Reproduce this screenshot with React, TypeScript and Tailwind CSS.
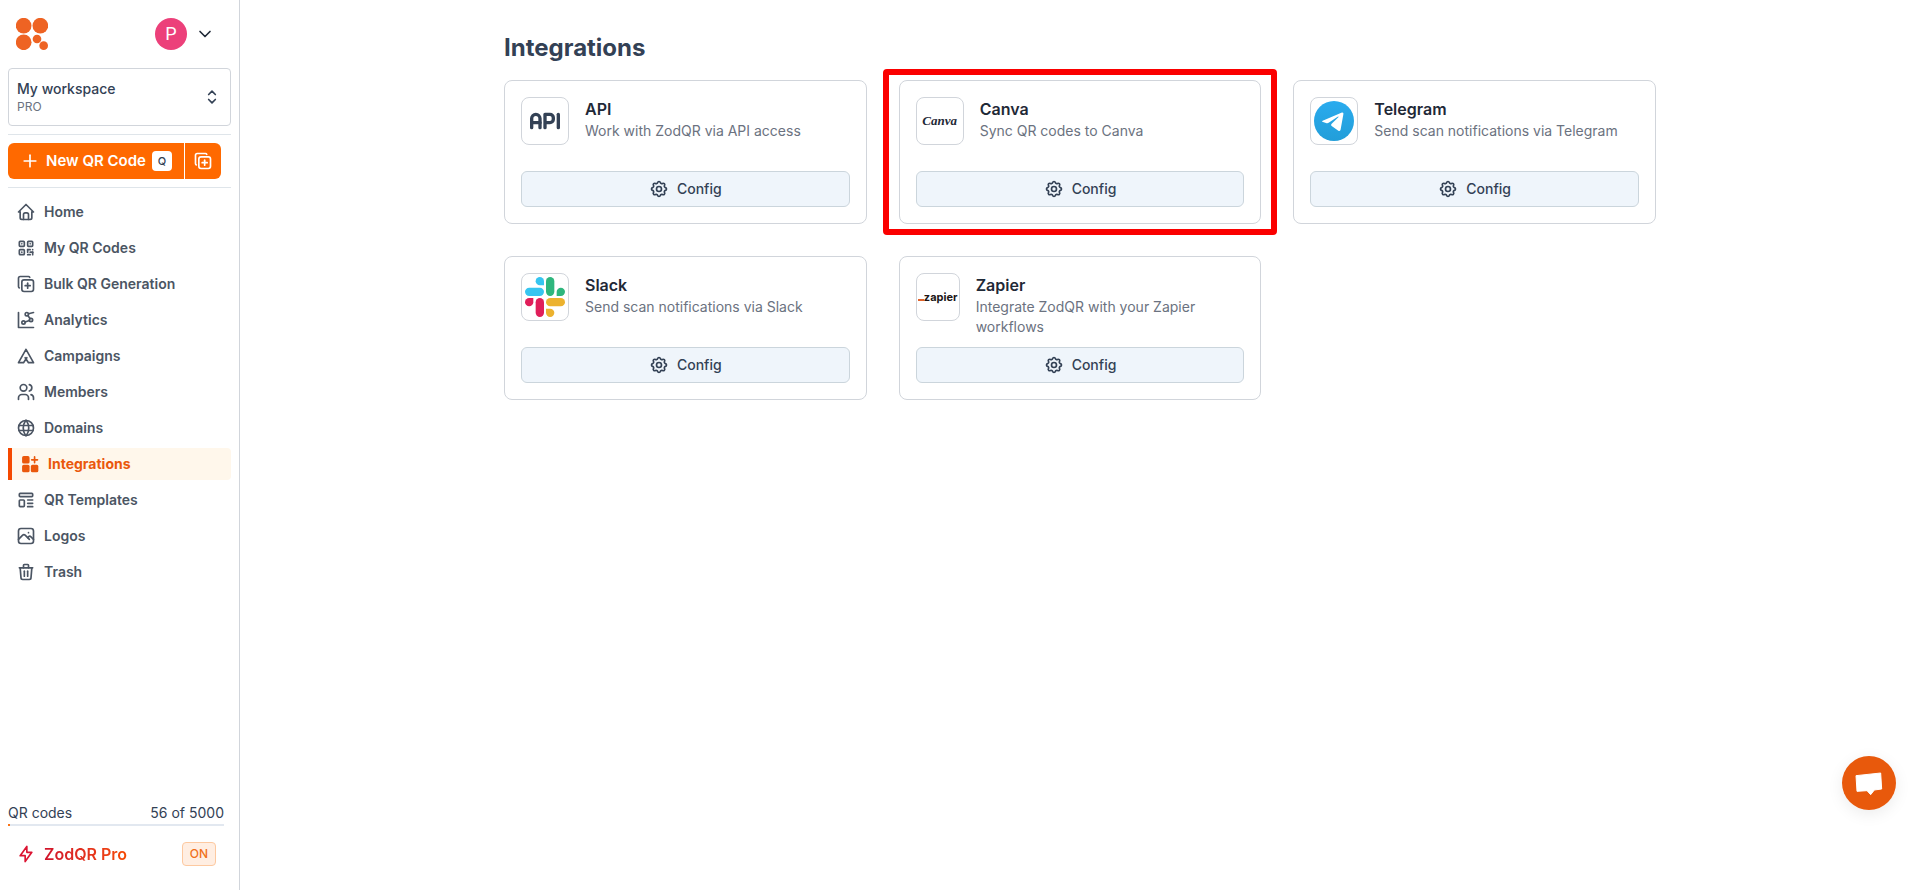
import type { ComponentType, ReactNode } from "react";
import {
  TbApi,
  TbBolt,
  TbChartDots2,
  TbChevronDown,
  TbCopyPlus,
  TbHome,
  TbPhoto,
  TbPlus,
  TbQrcode,
  TbSelector,
  TbSettings,
  TbTemplate,
  TbTent,
  TbTrash,
  TbUsers,
  TbWorld,
} from "react-icons/tb";

type IconProps = { className?: string };

function BrandLogo() {
  return (
    <svg viewBox="0 0 96 96" className="size-8" fill="#ee6323" aria-hidden="true">
      <circle cx="23" cy="23" r="23.5" />
      <circle cx="73" cy="23" r="23.5" />
      <circle cx="23" cy="73" r="23.5" />
      <circle cx="63" cy="63" r="13" />
      <circle cx="83" cy="83" r="13" />
    </svg>
  );
}

function AppsIcon({ className }: IconProps) {
  return (
    <svg viewBox="0 0 24 24" className={className} fill="currentColor" aria-hidden="true">
      <rect x="2.5" y="2.5" width="9" height="9" rx="2" />
      <rect x="2.5" y="13" width="9" height="9" rx="2" />
      <rect x="13" y="13" width="9" height="9" rx="2" />
      <path d="M17.5 3.5v7M14 7h7" stroke="currentColor" strokeWidth="2" strokeLinecap="round" />
    </svg>
  );
}

function TelegramLogo() {
  return (
    <svg viewBox="0 0 120 120" className="size-10 shrink-0" aria-hidden="true">
      <defs>
        <linearGradient id="telegram-sky" x1="0" y1="0" x2="0" y2="1">
          <stop offset="0" stopColor="#2aabee" />
          <stop offset="1" stopColor="#229ed9" />
        </linearGradient>
      </defs>
      <circle cx="60" cy="60" r="60" fill="url(#telegram-sky)" />
      <path
        d="M26 59 82 35.500c5-2 7 0 6 5L80 85c-1 6-4 6-8 3.500L53 75q-4-3 0-7l20-19q2-4-2-2L44 65.500q-3 2-6 1L27 63q-6-2-1-4Z"
        fill="#fff"
      />
    </svg>
  );
}

function SlackLogo() {
  return (
    <svg viewBox="0 0 120 120" className="size-10 shrink-0" aria-hidden="true">
      <g fill="#36c5f0">
        <rect x="0" y="32" width="57" height="25" rx="12.500" />
        <path d="M57 25V12.500A12.500 12.500 0 1 0 44.500 25Z" />
      </g>
      <g fill="#2eb67d">
        <rect x="63" y="0" width="25" height="57" rx="12.500" />
        <path d="M95 57h12.500A12.500 12.500 0 1 0 95 44.500Z" />
      </g>
      <g fill="#ecb22e">
        <rect x="63" y="63" width="57" height="25" rx="12.500" />
        <path d="M63 95v12.500A12.500 12.500 0 1 0 75.500 95Z" />
      </g>
      <g fill="#e01e5a">
        <rect x="32" y="63" width="25" height="57" rx="12.500" />
        <path d="M25 63H12.500A12.500 12.500 0 1 0 25 75.500Z" />
      </g>
    </svg>
  );
}

const navItems: { label: string; icon: ComponentType<IconProps>; active?: boolean }[] = [
  { label: "Home", icon: TbHome },
  { label: "My QR Codes", icon: TbQrcode },
  { label: "Bulk QR Generation", icon: TbCopyPlus },
  { label: "Analytics", icon: TbChartDots2 },
  { label: "Campaigns", icon: TbTent },
  { label: "Members", icon: TbUsers },
  { label: "Domains", icon: TbWorld },
  { label: "Integrations", icon: AppsIcon, active: true },
  { label: "QR Templates", icon: TbTemplate },
  { label: "Logos", icon: TbPhoto },
  { label: "Trash", icon: TbTrash },
];

type Integration = {
  name: string;
  description: string;
  logo: ReactNode;
  narrow?: boolean;
  highlighted?: boolean;
};

const integrations: Integration[] = [
  {
    name: "API",
    description: "Work with ZodQR via API access",
    logo: <TbApi className="size-10 shrink-0 text-[#334155]" />,
  },
  {
    name: "Canva",
    description: "Sync QR codes to Canva",
    logo: (
      <span className="font-['Liberation_Serif',serif] text-[13px] font-bold text-[#1f2937] italic">Canva</span>
    ),
    highlighted: true,
  },
  {
    name: "Telegram",
    description: "Send scan notifications via Telegram",
    logo: <TelegramLogo />,
  },
  {
    name: "Slack",
    description: "Send scan notifications via Slack",
    logo: <SlackLogo />,
  },
  {
    name: "Zapier",
    description: "Integrate ZodQR with your Zapier workflows",
    logo: (
      <span className="flex items-baseline text-[11px] font-bold text-[#201515]">
        <span className="h-[2px] w-[6px] bg-[#e0622a]" />
        zapier
      </span>
    ),
    narrow: true,
  },
];

function IntegrationCard({ name, description, logo, narrow, highlighted }: Integration) {
  return (
    <li className="relative rounded-lg border border-[#d1d5db] bg-white p-4">
      <div className="flex min-h-16 items-start gap-4">
        <div
          className={
            narrow
              ? "flex h-12 w-11 shrink-0 items-center justify-center rounded-lg border border-[#d1d5db]"
              : "flex size-12 shrink-0 items-center justify-center rounded-lg border border-[#d1d5db]"
          }
        >
          {logo}
        </div>
        <div>
          <h2 className="text-base font-semibold text-[#1f2937]">{name}</h2>
          <p className="text-sm text-[#6b7280]">{description}</p>
        </div>
      </div>
      <button
        type="button"
        aria-label={`Config ${name}`}
        className="mt-2.5 flex h-9 w-full items-center justify-center gap-2 rounded-md border border-[#cbd5dc] bg-[#eff5fb] text-sm font-medium text-[#334155]"
      >
        <TbSettings className="size-5" />
        Config
      </button>
      {highlighted && (
        <div className="pointer-events-none absolute -inset-x-[17px] -inset-y-3 rounded border-6 border-[#fb0000]" />
      )}
    </li>
  );
}

function Sidebar() {
  return (
    <aside className="flex w-60 shrink-0 flex-col border-r border-[#d1d5db] px-2">
      <div className="flex items-center justify-between pt-[18px] pr-4 pl-2">
        <a href="#" aria-label="ZodQR">
          <BrandLogo />
        </a>
        <button type="button" aria-label="Account" className="flex items-center gap-2">
          <span className="flex size-8 items-center justify-center rounded-full bg-[#ec407a] font-['Roboto',sans-serif] text-lg text-white">
            P
          </span>
          <TbChevronDown className="size-5 text-[#1f2937]" />
        </button>
      </div>

      <button
        type="button"
        className="mt-[18px] flex h-[58px] items-center justify-between rounded border border-[#d1d5db] px-2 text-left"
      >
        <span className="flex flex-col">
          <span className="text-sm font-medium text-[#334155]">My workspace</span>
          <span className="text-xs text-[#6b7280]">PRO</span>
        </span>
        <TbSelector className="size-5 text-[#334155]" />
      </button>

      <div className="mt-2 flex gap-px border-y border-[#dfe5ea] py-2">
        <button
          type="button"
          className="flex h-9 items-center gap-1.5 rounded-l-md bg-[#ff6900] px-3 text-[15px] font-semibold whitespace-nowrap text-white"
        >
          <TbPlus className="size-5" />
          New QR Code
          <kbd className="flex size-5 items-center justify-center rounded-sm bg-white font-['Inter',sans-serif] text-[11px] font-medium text-[#334155]">
            Q
          </kbd>
        </button>
        <button
          type="button"
          aria-label="Bulk create"
          className="flex size-9 items-center justify-center rounded-r-md bg-[#ff6900] text-white"
        >
          <TbCopyPlus className="size-5" />
        </button>
      </div>

      <nav className="mt-2 flex flex-col gap-1">
        {navItems.map(({ label, icon: Icon, active }) => (
          <a
            key={label}
            href="#"
            aria-current={active ? "page" : undefined}
            className={
              active
                ? "flex h-8 items-center gap-2 rounded-r border-l-4 border-[#f54900] bg-[#fff7eb] px-2 text-sm font-bold text-[#ea580c]"
                : "flex h-8 items-center gap-2 rounded px-2 text-sm font-semibold text-[#4b5563]"
            }
          >
            <Icon className="size-5" />
            {label}
          </a>
        ))}
      </nav>

      <div className="mt-auto pr-[7px] pb-5">
        <div className="flex justify-between text-sm text-[#334155]">
          <span>QR codes</span>
          <span>56 of 5000</span>
        </div>
        <div className="mt-px h-[2px] bg-[#e2e8f0]">
          <div className="h-full w-[2px] bg-[#f97316]" />
        </div>
        <div className="mt-3 flex h-8 items-center gap-2 px-2">
          <TbBolt className="size-5 text-[#dc1432]" />
          <span className="bg-linear-to-r from-[#d0102a] to-[#f54900] bg-clip-text text-base font-semibold text-transparent">
            ZodQR Pro
          </span>
          <span className="ml-auto flex h-6 items-center rounded border border-[#fdc9a0] bg-[#ffeee2] px-[7px] text-xs font-medium text-[#f0701a]">
            ON
          </span>
        </div>
      </div>
    </aside>
  );
}

export default function App() {
  return (
    <div className="flex min-h-screen bg-white font-['Inter',sans-serif]">
      <Sidebar />
      <main className="flex-1 px-8 pt-8">
        <div className="mx-auto max-w-6xl">
          <h1 className="text-2xl font-bold text-[#334155]">Integrations</h1>
          <ul className="mt-4 grid grid-cols-3 gap-8">
            {integrations.map((item) => (
              <IntegrationCard key={item.name} {...item} />
            ))}
          </ul>
        </div>
      </main>
      <button
        type="button"
        aria-label="Open chat"
        className="fixed right-6 bottom-20 size-[54px] rounded-full bg-[#e8590c] shadow-[0_4px_16px_rgba(0,0,0,0.08)]"
      >
        <svg viewBox="0 0 162 162" className="size-full" aria-hidden="true">
          <path
            d="M42 59 116 51 119 99 97 102 86 116 75 104 45 106Z"
            fill="#fff"
            stroke="#fff"
            strokeWidth="3"
            strokeLinejoin="round"
          />
        </svg>
      </button>
    </div>
  );
}
